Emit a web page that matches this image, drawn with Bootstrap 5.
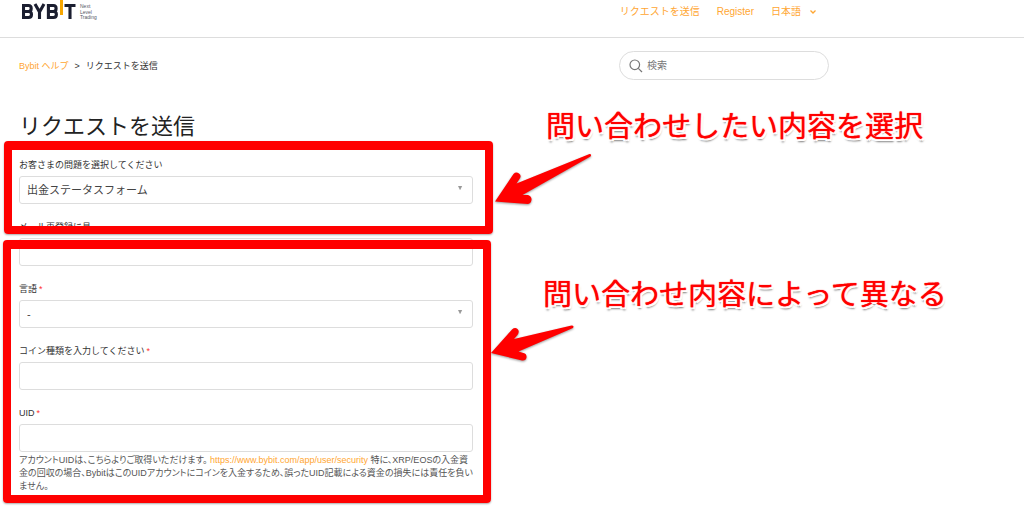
<!DOCTYPE html>
<html lang="ja">
<head>
<meta charset="utf-8">
<meta name="viewport" content="width=device-width, initial-scale=1">
<title>リクエストを送信 – Bybit ヘルプ</title>
<link href="https://cdn.jsdelivr.net/npm/bootstrap@5.3.0/dist/css/bootstrap.min.css" rel="stylesheet">
<style>
  body { font-family: "Liberation Sans", "Noto Sans CJK JP", sans-serif; font-size: 9px; line-height: 14px; color: #333; background: #fff; }
  a { color: #ffa632; text-decoration: none; }
  .page-inner { max-width: 848px; padding: 0 19px; }
  .site-header { height: 38px; border-bottom: 1px solid #ddd; }
  .site-logo { margin-left: 3px; }
  .site-links { font-size: 10px; margin-right: 12px; gap: 17px; padding-top: 5px; }
  .lang-btn { font-size: 10px; line-height: 14px; color: #ffa632; }
  .crumb-bar { padding-top: 13px; }
  .crumbs { gap: 6px; }
  .search-box { width: 210px; height: 29px; border: 1px solid #ddd; border-radius: 15px; padding: 0 9px; }
  .search-box input { font-size: 10px; line-height: 14px; color: #555; box-shadow: none; outline: 0; }
  .search-box input::placeholder { color: #777; }
  h1 { font-size: 22px; line-height: 32px; margin: 31px 0 15px; color: #222; font-weight: 400; }
  .request-form { width: 56%; }
  .form-field { margin-bottom: 16px; }
  .form-field label { display: block; margin-bottom: 4px; }
  .req { color: #f33; margin-left: 2px; }
  .form-field .form-control, .form-field .form-select { height: 28px; font-size: 11px; line-height: 16px; padding: 5px 7px; border: 1px solid #ddd; border-radius: 3px; color: #444; background-color: #fff; }
  .form-field .form-select { background-image: url("data:image/svg+xml,%3Csvg xmlns='http://www.w3.org/2000/svg' viewBox='0 0 6 6'%3E%3Cpath d='M0 0h5L2.500 5z' fill='%23999'/%3E%3C/svg%3E"); background-size: 5px 5px; background-position: right 9px top 9px; }
  .hint { line-height: 13px; margin: 2px -3px 0 0; color: #555; font-feature-settings: "palt"; }
  .mark-box { border: 8px solid #f00; border-top-width: 9px; border-radius: 4px; box-shadow: 0 1px 2px #0005; pointer-events: none; }
  .mark-a { left: 4px; top: 141px; width: 489px; height: 93px; }
  .mark-b { left: 3px; top: 240px; width: 488px; height: 263px; }
  .mark-note { font-size: 29px; line-height: 40px; color: #f00; white-space: nowrap; font-family: "Noto Sans CJK JP", sans-serif; font-weight: 400; text-shadow: 0 0 1px #f00, 2px 0 #fff, -2px 0 #fff, 0 2px #fff, 0 -2px #fff, 2px 2px #fff, -2px 2px #fff, 2px -2px #fff, -2px -2px #fff, 1px 3px 2px #0008; }
  .note-a { left: 546px; top: 104px; }
  .note-b { left: 543px; top: 272px; }
  .arrow-a { left: 490px; top: 150px; }
  .arrow-b { left: 486px; top: 322px; }
  .mark-arrow { filter: drop-shadow(0 1px 1px #0006); }
</style>
</head>
<body>
<div class="position-relative">
  <header class="site-header">
    <div class="page-inner d-flex justify-content-between align-items-start">
      <a class="site-logo" href="#" aria-label="Bybit">
        <svg class="d-block" width="78" height="22" viewBox="0 0 78 22">
          <g fill="none" stroke="#1b1e30" stroke-width="3.100">
            <path d="M1.500 5.500h5q2.700 0 2.700 3t-2.700 3h-5m5 0q3 0 3 3t-3 3h-5V4"/>
            <path d="M13 4l4.500 8v7M22 4l-4.500 8"/>
            <path d="M26.400 5.500h5q2.700 0 2.700 3t-2.700 3h-5m5 0q3 0 3 3t-3 3h-5V4"/>
            <path d="M42.500 5.500h11M48 5v14"/>
          </g>
          <path d="M38 0h3v15h-3z" fill="#f7a600"/>
          <g fill="#555866" font-family="Liberation Sans" font-size="5"><text x="58" y="8">Next</text><text x="58" y="14">Level</text><text x="58" y="19">Trading</text></g>
        </svg>
      </a>
      <nav class="site-links d-flex align-items-center">
        <a href="#">リクエストを送信</a>
        <a href="#">Register</a>
        <button type="button" class="lang-btn border-0 bg-transparent p-0 d-flex align-items-center">日本語
          <svg class="ms-2" width="8" height="6" viewBox="0 0 8 6"><path d="M1.500 1.500L4 4l2.500-2.500" fill="none" stroke="#ffa632" stroke-width="1.300"/></svg>
        </button>
      </nav>
    </div>
  </header>
  <main class="page-inner">
    <div class="crumb-bar d-flex justify-content-between align-items-center">
      <nav class="crumbs d-flex" aria-label="breadcrumb"><a href="#">Bybit ヘルプ</a><span>&gt;</span><span>リクエストを送信</span></nav>
      <form class="search-box d-flex align-items-center">
        <svg class="flex-shrink-0" width="14" height="14" viewBox="0 0 14 14"><g fill="none" stroke="#777" stroke-width="1.200"><circle cx="5.800" cy="5.800" r="4.800"/><path d="M9.300 9.300L13 13"/></g></svg>
        <input class="form-control border-0 bg-transparent p-0 ms-1" type="search" placeholder="検索" aria-label="検索">
      </form>
    </div>
    <h1>リクエストを送信</h1>
    <form class="request-form">
      <div class="form-field">
        <label for="issue">お客さまの問題を選択してください</label>
        <select id="issue" class="form-select"><option>出金ステータスフォーム</option></select>
      </div>
      <div class="form-field">
        <label for="mail">メール再登録に具</label>
        <input id="mail" class="form-control" type="text">
      </div>
      <div class="form-field">
        <label for="lang">言語<span class="req">*</span></label>
        <select id="lang" class="form-select"><option>-</option></select>
      </div>
      <div class="form-field">
        <label for="coin">コイン種類を入力してください<span class="req">*</span></label>
        <input id="coin" class="form-control" type="text">
      </div>
      <div class="form-field">
        <label for="uid">UID<span class="req">*</span></label>
        <input id="uid" class="form-control" type="text">
        <p class="hint">アカウントUIDは、こちらよりご取得いただけます。 <a href="#">https://www.bybit.com/app/user/security</a> 特に、XRP/EOSの入金資金の回収の場合、BybitはこのUIDアカウントにコインを入金するため、誤ったUID記載による資金の損失には責任を負いません。</p>
      </div>
    </form>
  </main>
  <div class="mark-box mark-a position-absolute"></div>
  <div class="mark-box mark-b position-absolute"></div>
  <div class="mark-note note-a position-absolute">問い合わせしたい内容を選択</div>
  <div class="mark-note note-b position-absolute">問い合わせ内容によって異なる</div>
  <svg class="mark-arrow arrow-a position-absolute" width="105" height="60" viewBox="0 0 105 60"><path d="M5 51.500L23.500 24Q26 21.500 29 23.500T29.500 29L26.500 33.500L99.500 4Q102 4 100.500 6.500L32.500 45H38Q42 46.500 41.500 50T38 54Z" fill="#f00"/></svg>
  <svg class="mark-arrow arrow-b position-absolute" width="95" height="45" viewBox="0 0 95 45"><path d="M5 31L26 7.500Q29 5 31.500 7T31.500 13L28 17L85.500 3.500Q88.500 3.500 87 6L32.500 29.500L37.500 31Q41 32 40.500 35.500T36 38.500Z" fill="#f00"/></svg>
</div>
<script src="https://cdn.jsdelivr.net/npm/bootstrap@5.3.0/dist/js/bootstrap.bundle.min.js"></script>
</body>
</html>
